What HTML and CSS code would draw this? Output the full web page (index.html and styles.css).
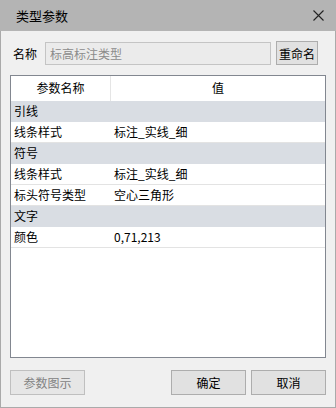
FILE: index.html
```html
<!DOCTYPE html>
<html lang="zh-CN">
<head>
<meta charset="UTF-8">
<title>类型参数</title>
<link rel="stylesheet" href="styles.css">
</head>
<body>
<div class="window">
    <div class="titlebar">
        <span class="title">类型参数</span>
        <svg class="close" width="11" height="11" viewBox="0 0 11 11">
            <path d="M0.5 0.5 L10.5 10.5 M10.5 0.5 L0.5 10.5" stroke="#222" stroke-width="1.1" fill="none"/>
        </svg>
    </div>
    <div class="content">
        <div class="name-row">
            <label for="typeName">名称</label>
            <input type="text" id="typeName" class="name-input" value="标高标注类型" readonly>
            <button class="btn rename">重命名</button>
        </div>
        <div class="grid">
            <div class="row head">
                <div class="cell c1">参数名称</div>
                <div class="cell c2">值</div>
            </div>
            <div class="row group"><div class="cell">引线</div></div>
            <div class="row">
                <div class="cell c1">线条样式</div>
                <div class="cell c2">标注_实线_细</div>
            </div>
            <div class="row group"><div class="cell">符号</div></div>
            <div class="row">
                <div class="cell c1">线条样式</div>
                <div class="cell c2">标注_实线_细</div>
            </div>
            <div class="row">
                <div class="cell c1">标头符号类型</div>
                <div class="cell c2">空心三角形</div>
            </div>
            <div class="row group"><div class="cell">文字</div></div>
            <div class="row">
                <div class="cell c1">颜色</div>
                <div class="cell c2">0,71,213</div>
            </div>
        </div>
        <div class="footer">
            <button class="btn wide" disabled>参数图示</button>
            <div class="spacer"></div>
            <button class="btn wide">确定</button>
            <button class="btn wide">取消</button>
        </div>
    </div>
</div>
</body>
</html>
```
FILE: styles.css
```css
* {
    box-sizing: border-box;
}
body {
    margin: 0;
    font-family: "Noto Sans CJK SC", "Microsoft YaHei", sans-serif;
    font-size: 12px;
    color: #000;
}
.window {
    width: 336px;
    height: 408px;
    background-color: #f0f0f0;
    border: 1px solid #aaaaaa;
    border-top: none;
    display: flex;
    flex-direction: column;
}
.titlebar {
    height: 31px;
    margin: 0 -1px;
    background-color: #b4b4b4;
    display: flex;
    align-items: center;
    justify-content: space-between;
    padding: 0 12px 0 16px;
}
.title {
    font-size: 13px;
    line-height: 31px;
}
.content {
    flex: 1;
    padding: 10px 9px 12px 9px;
    display: flex;
    flex-direction: column;
}
.name-row {
    display: flex;
    align-items: center;
    height: 24px;
}
.name-row label {
    width: 35px;
    padding-left: 3px;
    font-size: 12px;
}
.name-input {
    width: 226px;
    height: 23px;
    margin-top: 1px;
    border: 1px solid #c4c4c4;
    background-color: #ebebeb;
    color: #8b8b8b;
    font-family: inherit;
    font-size: 12px;
    padding: 0 4px;
    outline: none;
}
.btn {
    height: 25px;
    border: 1px solid #adadad;
    background-color: #e1e1e1;
    font-family: inherit;
    font-size: 12px;
    color: #000;
    padding: 0;
}
.btn:disabled {
    color: #838383;
    border-color: #bfbfbf;
    background-color: #e6e6e6;
}
.rename {
    width: 42px;
    height: 24px;
    margin-left: 5px;
}
.grid {
    margin-top: 10px;
    height: 283px;
    border: 1px solid #828790;
    background-color: #fff;
}
.row {
    display: flex;
    height: 21px;
    border-bottom: 1px solid #e3e3e3;
    line-height: 20px;
}
.row.head {
    height: 25px;
    line-height: 24px;
    border-bottom: none;
}
.row.head .cell {
    text-align: center;
    padding: 0;
}
.row.head .c1 {
    border-right: 1px solid #e5e5e5;
}
.row.group {
    background-color: #d9dde3;
    border-bottom-color: #d9dde3;
}
.cell {
    padding-left: 3px;
    white-space: nowrap;
}
.c1 {
    width: 100px;
}
.c2 {
    flex: 1;
}
.footer {
    margin-top: 12px;
    display: flex;
    gap: 5px;
}
.spacer {
    flex: 1;
}
.wide {
    width: 75px;
}
```
